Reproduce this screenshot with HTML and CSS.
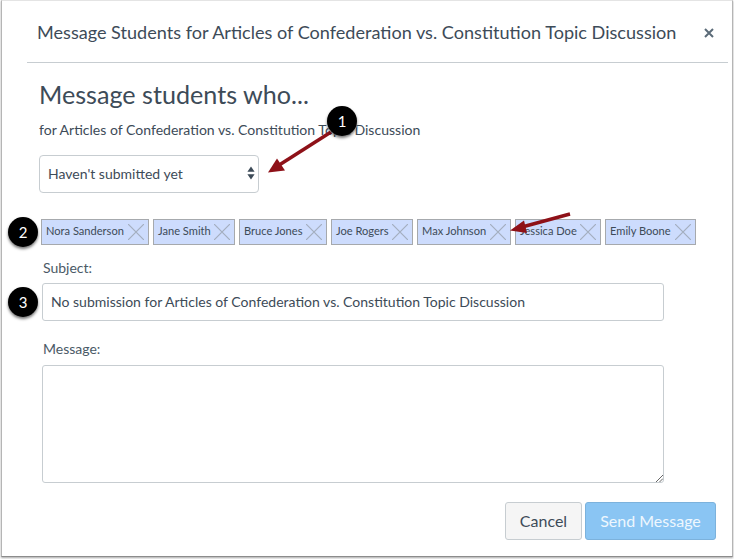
FILE: index.html
```html
<!DOCTYPE html>
<html lang="en">
<head>
<meta charset="utf-8">
<title>Message Students</title>
<link rel="stylesheet" href="styles.css">
</head>
<body>
<div class="dialog">
  <header class="dialog-header">
    <h1 class="dialog-title">Message Students for Articles of Confederation vs. Constitution Topic Discussion</h1>
    <svg class="close" width="10" height="10" viewBox="0 0 10 10"><path d="M1 1l8 8M9 1l-8 8" stroke="#5b6b78" stroke-width="2" fill="none"/></svg>
  </header>
  <section class="intro">
    <h2 class="heading">Message students who...</h2>
    <p class="sub">for Articles of Confederation vs. Constitution Topic Discussion</p>
    <div class="select">
      <span>Haven't submitted yet</span>
      <svg width="8" height="14" viewBox="0 0 8 14"><path d="M4 0.5L7.6 5.8H0.4zM4 13.5L0.4 8.2H7.6z" fill="#3d4b58"/></svg>
    </div>
  </section>
  <div class="chips">
    <span class="chip chip-a"><span class="chip-name">Nora Sanderson</span><svg class="x" viewBox="0 0 16 16"><path d="M0 0l16 16M16 0L0 16"/></svg></span>
    <span class="chip chip-b"><span class="chip-name">Jane Smith</span><svg class="x" viewBox="0 0 16 16"><path d="M0 0l16 16M16 0L0 16"/></svg></span>
    <span class="chip chip-c"><span class="chip-name">Bruce Jones</span><svg class="x" viewBox="0 0 16 16"><path d="M0 0l16 16M16 0L0 16"/></svg></span>
    <span class="chip chip-d"><span class="chip-name">Joe Rogers</span><svg class="x" viewBox="0 0 16 16"><path d="M0 0l16 16M16 0L0 16"/></svg></span>
    <span class="chip chip-e"><span class="chip-name">Max Johnson</span><svg class="x" viewBox="0 0 16 16"><path d="M0 0l16 16M16 0L0 16"/></svg></span>
    <span class="chip chip-f"><span class="chip-name">Jessica Doe</span><svg class="x" viewBox="0 0 16 16"><path d="M0 0l16 16M16 0L0 16"/></svg></span>
    <span class="chip chip-g"><span class="chip-name">Emily Boone</span><svg class="x" viewBox="0 0 16 16"><path d="M0 0l16 16M16 0L0 16"/></svg></span>
  </div>
  <section class="form">
    <div class="label label-subject">Subject:</div>
    <div class="input">No submission for Articles of Confederation vs. Constitution Topic Discussion</div>
    <div class="label label-message">Message:</div>
    <div class="textarea">
      <svg class="grip" width="8" height="8" viewBox="0 0 8 8"><path d="M8 1L1 8M8 4.5L4.500 8" stroke="#666" stroke-width="1" fill="none"/></svg>
    </div>
  </section>
  <footer class="actions">
    <span class="btn btn-cancel">Cancel</span>
    <span class="btn btn-send">Send Message</span>
  </footer>

  <svg class="arrows" width="734" height="559" viewBox="0 0 734 559">
    <path d="M331 132L280 164.500" stroke="#8e1118" stroke-width="3.500" fill="none"/>
    <path d="M268 172.500L277 158.500L285 170.500z" fill="#8e1118"/>
    <path d="M570 214L522 227" stroke="#8e1118" stroke-width="3.500" fill="none"/>
    <path d="M510 230.500L524 220.500L527 233z" fill="#8e1118"/>
  </svg>
  <span class="callout callout-1">1</span>
  <span class="callout callout-2">2</span>
  <span class="callout callout-3">3</span>
</div>
</body>
</html>
```
FILE: styles.css
```css
* { box-sizing: border-box; }
html, body { margin: 0; padding: 0; }
body {
  width: 734px;
  height: 559px;
  background: #fff;
  font-family: Lato, "Open Sans", sans-serif;
  color: #3d4b58;
  overflow: hidden;
}
.dialog {
  position: relative;
  width: 732px;
  height: 557px;
  margin-left: 1px;
  background: #fff;
  border: 1px solid #b5b5b5;
  border-top-color: #e4e4e4;
  border-bottom-color: #8c8c8c;
  box-shadow: 0 1px 2px rgba(0,0,0,.35);
}
.dialog-header {
  display: flex;
  align-items: center;
  justify-content: space-between;
  height: 62px;
  margin: 0 4px 0 25px;
  padding: 0 14px 0 10px;
  border-bottom: 1px solid #c7cdd1;
}
.dialog-title {
  margin: 0;
  font-size: 18.08px;
  font-weight: 400;
  line-height: 62px;
  white-space: nowrap;
  color: #3d4b58;
}
.close { flex: none; margin-top: 3px; }
.intro { padding: 17px 0 0 37px; }
.heading {
  margin: 0;
  font-size: 25.15px;
  font-weight: 400;
  line-height: 28px;
  color: #3d4b58;
}
.sub {
  margin: 12px 0 0;
  font-size: 14.05px;
  line-height: 20px;
}
.select {
  display: flex;
  align-items: center;
  justify-content: space-between;
  width: 220px;
  height: 38px;
  margin-top: 15px;
  padding: 0 3px 2px 8px;
  background: #fff;
  border: 1px solid #c7cdd1;
  border-radius: 4px;
  font-size: 14px;
}
.chips {
  display: flex;
  gap: 4px;
  margin: 26px 0 0 39px;
}
.chip {
  display: flex;
  align-items: center;
  justify-content: space-between;
  height: 26px;
  padding: 0 4px;
  background: #cddcfd;
  border: 1px solid #a6a9ad;
  font-size: 11.1px;
  white-space: nowrap;
}
.chip-name { margin-bottom: 4px; }
.chip-a { width: 108px; }
.chip-b { width: 82px; }
.chip-c { width: 88px; }
.chip-d { width: 82px; }
.chip-e { width: 94px; }
.chip-f { width: 86px; }
.chip-g { width: 91px; }
.x { width: 16px; height: 16px; flex: none; }
.x path { stroke: #a3aebf; stroke-width: 1.2; fill: none; }
.form { padding-left: 40px; }
.label { font-size: 14px; line-height: 20px; padding-left: 1px; color: #4a5966; }
.label-subject { margin-top: 13px; }
.label-message { margin-top: 18px; }
.input {
  display: flex;
  align-items: center;
  width: 622px;
  height: 38px;
  margin-top: 5px;
  padding: 0 0 2px 8px;
  border: 1px solid #c7cdd1;
  border-radius: 3px;
  font-size: 14.03px;
}
.textarea {
  position: relative;
  width: 622px;
  height: 118px;
  margin-top: 6px;
  border: 1px solid #c7cdd1;
  border-radius: 3px;
}
.grip { position: absolute; right: 0; bottom: 0; }
.actions {
  display: flex;
  justify-content: flex-end;
  gap: 3px;
  margin: 19px 16px 0 0;
}
.btn {
  display: flex;
  align-items: center;
  justify-content: center;
  height: 38px;
  padding-bottom: 2px;
  border-radius: 3px;
  font-size: 16px;
}
.btn-cancel {
  width: 77px;
  background: #f5f5f5;
  border: 1px solid #c7cdd1;
}
.btn-send {
  width: 131px;
  background: #8ac5f3;
  border: 1px solid #7cb2dc;
  color: #eef7fe;
}
.arrows { position: absolute; left: -2px; top: -1px; pointer-events: none; }
.callout {
  position: absolute;
  display: flex;
  align-items: center;
  justify-content: center;
  width: 30px;
  height: 30px;
  border-radius: 50%;
  background: #000;
  color: #fff;
  font-size: 15px;
  box-shadow: 0 2px 3px rgba(0,0,0,.55), 0 0 0 1px rgba(255,255,255,.5);
}
.callout-1 { left: 325px; top: 105px; }
.callout-2 { left: 6px; top: 216px; }
.callout-3 { left: 6px; top: 286px; }
```
